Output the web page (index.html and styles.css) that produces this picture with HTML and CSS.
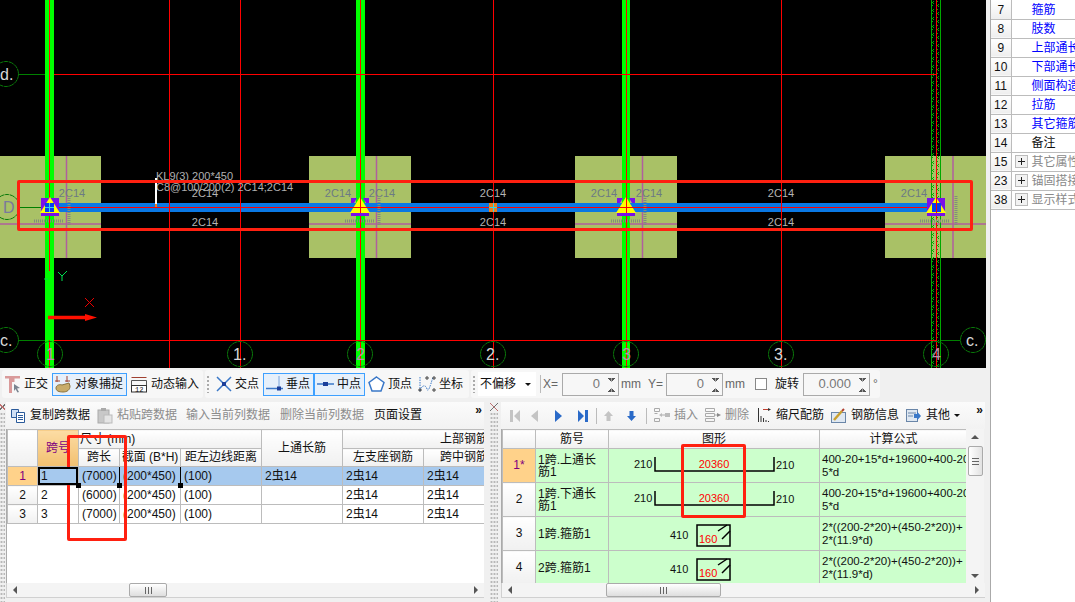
FILE: index.html
```html
<!DOCTYPE html>
<html lang="zh-CN">
<head>
<meta charset="utf-8">
<title>钢筋平法输入</title>
<link rel="stylesheet" href="styles.css">
</head>
<body>
<div class="app">
  <main class="main">
    <svg class="canvas" width="986" height="368" viewBox="0 0 986 368">
      <defs>
        <pattern id="hatch" width="10" height="8" patternUnits="userSpaceOnUse">
          <path class="hatch-x" d="M1 1l3 3m0-3l-3 3M1 4l2 2M6 4l3 3m0-3l-3 3M6 0l2 2"/>
        </pattern>
      </defs>
      <rect class="pad" x="0" y="156" width="101" height="102"/>
      <rect class="pad" x="309" y="156" width="102" height="102"/>
      <rect class="pad" x="575" y="156" width="102" height="102"/>
      <rect class="pad" x="885" y="156" width="101" height="102"/>
      <path class="mauve" d="M66.500 156v102M0 224h101M376.500 156v102M309 224h102M642.500 156v102M575 224h102M953 156v102M885 224h101"/>
      <rect class="col" x="45" y="0" width="9" height="368"/>
      <rect class="col" x="356" y="0" width="9" height="368"/>
      <rect class="col" x="622" y="0" width="8" height="368"/>
      <rect x="931" y="0" width="10" height="368" fill="url(#hatch)"/>
      <path class="hatch-line" d="M931.500 0v368M940.500 0v368"/>
      <rect class="beam" x="54" y="203" width="877" height="9"/>
      <path class="red" d="M169.500 0v368M240.500 0v368M360.500 0v368M493.500 0v368M626.500 0v368M781.500 0v368M936.500 0v368M49.500 0v271M49.500 340v28M54 74.500h882M54 340.500h882M54 207.500h882"/>
      <path class="axis" d="M19 74.500h26M20 207.500h25M19 340.500h26M941 340.500h19"/>
      <g class="bubble">
        <circle cx="6" cy="74" r="12.500"/><circle cx="7" cy="207" r="12.500"/><circle cx="6" cy="340" r="12.500"/>
        <circle cx="973" cy="340" r="12.500"/><circle cx="50" cy="354" r="12.500"/><circle cx="240" cy="354" r="12.500"/>
        <circle cx="360" cy="354" r="12.500"/><circle cx="493" cy="354" r="12.500"/><circle cx="626" cy="354" r="12.500"/>
        <circle cx="781" cy="354" r="12.500"/><circle cx="936" cy="354" r="12.500"/>
      </g>
      <g class="axis-label">
        <text x="0" y="80">d.</text><text class="dim" x="3" y="213">D</text><text x="0" y="346">c.</text>
        <text x="966" y="346">c.</text><text class="pink" x="46" y="360">1</text><text x="233" y="360">1.</text>
        <text class="pink" x="356" y="360">2</text><text x="486" y="360">2.</text><text class="pink" x="622" y="360">3</text>
        <text x="774" y="360">3.</text><text class="pink" x="932" y="360">4</text>
      </g>
      <g class="rebar-label">
        <text x="205" y="197">2C14</text><text x="205" y="226">2C14</text>
        <text x="493" y="197">2C14</text><text x="493" y="226">2C14</text>
        <text x="781" y="197">2C14</text><text x="781" y="226">2C14</text>
      </g>
      <g class="rebar-label on-pad">
        <text x="72" y="197">2C14</text><text x="338" y="197">2C14</text><text x="382" y="197">2C14</text>
        <text x="604" y="197">2C14</text><text x="649" y="197">2C14</text><text x="914" y="197">2C14</text>
      </g>
      <path class="tiny" d="M34 221h30M345 221h30M611 221h30M920 221h30"/>
      <path class="tiny" d="M69 196v30M379 196v30M645 196v30M956 196v30"/>
      <text class="beam-name" x="156" y="180">KL9(3) 200*450</text>
      <text class="beam-name" x="156" y="191">C8@100/200(2) 2C14;2C14</text>
      <rect class="white" x="155" y="178" width="2" height="26"/>
      <rect class="orange" x="155" y="204" width="2" height="3"/>
      <rect class="orange" x="489" y="203" width="8" height="9"/>
      <path class="cyan" d="M493.500 203v9M489 207.500h8"/>
      <g class="node">
        <path class="violet" d="M41 198h18v18H41z"/><path class="yellow" d="M50 197l10 16H40z"/>
        <rect class="blue" x="45" y="203" width="9" height="9"/><path class="cyan" d="M49.500 203v9M45 207.500h9"/>
        <path class="violet" d="M351 198h6l-3 5h-3zM369 198h-6l3 5h3zM351 213h18v3h-18z"/><path class="yellow" d="M360 197l10 16h-20z"/>
        <path class="red" d="M360.500 197v16M351 207.500h19"/>
        <path class="violet" d="M617 198h6l-3 5h-3zM635 198h-6l3 5h3zM617 213h18v3h-18z"/><path class="yellow" d="M626 197l10 16h-20z"/>
        <path class="red" d="M626.500 197v16M617 207.500h19"/>
        <path class="violet" d="M927 198h18v18h-18z"/><path class="yellow" d="M936 197l10 16h-20z"/>
        <rect class="blue" x="932" y="203" width="9" height="9"/><path class="red" d="M936.500 197v16"/>
      </g>
      <path class="ucs-y" d="M58 272l4 4 5-5M62 276v5M44 279h4"/>
      <path class="ucs-x" d="M85 298l9 9m0-9l-9 9"/>
      <path class="arrow" d="M48 317.500h37"/><path class="arrow-head" d="M85 314l12 3.500-12 3.500z"/>
    </svg>

    <div class="toolbar">
      <div class="group g1">
        <div class="btn w47"><svg width="16" height="17" viewBox="0 0 16 17"><path fill="#d99a9a" d="M0 0h15v2.500h-5.500V6H7v11H4V2.500H0z"/><path fill="#7a8490" d="M9 8l6 4-3 .5 2 3.500-1.500.5-2-3.500-1.500 2z"/></svg><span>正交</span></div>
        <div class="btn on w75"><svg width="18" height="18" viewBox="0 0 18 18"><path fill="none" stroke="#a04030" d="M3 1v6M13 1v6M1 6h5M11 6h5"/><path fill="#c9ac6a" stroke="#8a7440" d="M2 13c0-3 4-4 6-3l7-2 1 3c0 4-3 6-7 6-4 0-7-1-7-4z"/></svg><span>对象捕捉</span></div>
        <div class="btn w70"><svg width="17" height="17" viewBox="0 0 17 17"><path fill="none" stroke="#a04030" d="M.5 1.500h15"/><path fill="none" stroke="#555" d="M.5 4.500h15M.5 4.500v5M15.500 4.500v5"/><rect x=".5" y="9.500" width="15" height="6.500" fill="#fff" stroke="#333"/><text class="mini" x="4" y="15.500">12</text></svg><span>动态输入</span></div>
      </div>
      <div class="group g2">
        <i class="grip"></i>
        <div class="btn w48"><svg width="16" height="16" viewBox="0 0 16 16"><path stroke="#3a78c8" stroke-width="1.500" d="M1 1l14 14M15 1L1 15"/><rect x="6" y="6" width="4" height="4" fill="#1c3f9a"/></svg><span>交点</span></div>
        <div class="btn on w51"><svg width="17" height="16" viewBox="0 0 17 16"><path stroke="#3a78c8" stroke-width="1.500" d="M0 12.500h17"/><path stroke="#7aa4dc" d="M13 0v13"/><rect x="11" y="10.500" width="4" height="4" fill="#1c3f9a"/></svg><span>垂点</span></div>
        <div class="btn on w51"><svg width="17" height="16" viewBox="0 0 17 16"><path stroke="#3a78c8" stroke-width="1.500" d="M0 8h17"/><rect x="6" y="6" width="5" height="4" fill="#1c3f9a"/></svg><span>中点</span></div>
        <div class="btn"><svg width="17" height="16" viewBox="0 0 17 16"><path fill="#fff" stroke="#3a78c8" stroke-width="1.500" d="M8.500 1L16 6.500 13 15H4L1 6.500z"/></svg><span>顶点</span></div>
        <div class="btn"><svg width="18" height="16" viewBox="0 0 18 16"><path fill="none" stroke="#3a78c8" stroke-dasharray="1.500 1" d="M2 1v14M2 15c2-7 6-6 7-2s3-2 6-12"/><path fill="none" stroke="#444" d="M1 13h2v2H1zM8 1h2v2H8zM15 1h2v2h-2zM15 13h2v2h-2z"/></svg><span>坐标</span></div>
      </div>
      <div class="group g3">
        <i class="grip"></i>
        <div class="select"><span>不偏移</span><b class="caret"></b></div>
        <i class="sep"></i>
        <span class="dim-label lab-x">X=</span>
        <div class="spin w57"><span>0</span><i class="spin-arrows"></i></div>
        <span class="dim-label lab-u">mm</span>
        <span class="dim-label lab-y">Y=</span>
        <div class="spin w57"><span>0</span><i class="spin-arrows"></i></div>
        <span class="dim-label lab-u">mm</span>
        <i class="check"></i>
        <span class="rot">旋转</span>
        <div class="spin w67"><span>0.000</span><i class="spin-arrows"></i></div>
        <span class="dim-label lab-d">°</span>
      </div>
    </div>

    <div class="panels">
      <i class="dots dots-left"></i>
      <section class="panel panel-left">
        <div class="ptools">
          <span class="pt"><svg width="16" height="15" viewBox="0 0 16 15"><path fill="#cfe0f5" stroke="#2a5a9a" d="M1.500 1.500h7v8h-7z"/><path fill="#fff" stroke="#2a5a9a" d="M6.500 4.500h8v10h-8z"/><path stroke="#2a5a9a" d="M8 7.500h5M8 9.500h5M8 11.500h5"/></svg>复制跨数据</span>
          <span class="pt off pt-p"><svg width="16" height="16" viewBox="0 0 16 16"><rect x="1" y="2" width="11" height="13" fill="#c8c8c8" stroke="#aaa"/><rect x="7" y="7" width="8" height="8" fill="#e4e4e4" stroke="#bbb"/><rect x="4" y="0" width="5" height="3" fill="#aaa"/></svg>粘贴跨数据</span>
          <span class="pt off">输入当前列数据</span>
          <span class="pt off pt-m">删除当前列数据</span>
          <span class="pt pt-m">页面设置</span>
          <b class="more">»</b>
        </div>
        <div class="grid-wrap">
          <table class="grid grid-span">
            <colgroup><col class="c30"><col class="c41"><col class="c41"><col class="c61"><col class="c81"><col class="c81"><col class="c81"><col class="c81"><col class="c81"></colgroup>
            <tr class="h19">
              <th rowspan="2"></th><th rowspan="2" class="hot">跨号</th>
              <th colspan="3" class="tl">尺寸 (mm)</th><th rowspan="2">上通长筋</th><th colspan="3">上部钢筋</th>
            </tr>
            <tr class="h18"><th>跨长</th><th>截面 (B*H)</th><th>距左边线距离</th><th>左支座钢筋</th><th>跨中钢筋</th><th>右支座钢筋</th></tr>
            <tr class="h19 sel">
              <th class="hot-row">1</th><td class="cur">1</td><td class="black-r">(7000)</td><td class="black-r">(200*450)</td><td>(100)</td><td>2虫14</td><td>2虫14</td><td>2虫14</td><td></td>
            </tr>
            <tr class="h19"><th>2</th><td>2</td><td class="black-l">(6000)</td><td>(200*450)</td><td>(100)</td><td></td><td>2虫14</td><td>2虫14</td><td></td></tr>
            <tr class="h19"><th>3</th><td>3</td><td class="black-l">(7000)</td><td>(200*450)</td><td>(100)</td><td></td><td>2虫14</td><td>2虫14</td><td></td></tr>
          </table>
        </div>
        <div class="hscroll"><i class="arr-l"></i><div class="track track-left"><div class="thumb"><i></i></div></div><i class="arr-r"></i></div>
      </section>
      <i class="dots dots-mid"></i>
      <section class="panel panel-right">
        <div class="ptools ptools-r">
          <span class="nav n1 off"><svg width="10" height="12" viewBox="0 0 10 12"><path fill="#c4c4c4" d="M0 0h3v12H0zM10 0v12L4 6z"/></svg></span>
          <span class="nav n2 off"><svg width="7" height="12" viewBox="0 0 7 12"><path fill="#c4c4c4" d="M7 0v12L0 6z"/></svg></span>
          <span class="nav"><svg width="7" height="12" viewBox="0 0 7 12"><path fill="#2a6ac8" d="M0 0v12l7-6z"/></svg></span>
          <span class="nav"><svg width="10" height="12" viewBox="0 0 10 12"><path fill="#2a6ac8" d="M0 0v12l6-6zM7 0h3v12H7z"/></svg></span>
          <i class="vsep"></i>
          <span class="nav n-up"><svg width="9" height="10" viewBox="0 0 9 10"><path fill="#c4c4c4" d="M4.500 0L9 5H6.500v5h-4V5H0z"/></svg></span>
          <span class="nav n-dn"><svg width="9" height="10" viewBox="0 0 9 10"><path fill="#2a6ac8" d="M2.500 0h4v5H9l-4.500 5L0 5h2.500z"/></svg></span>
          <i class="vsep"></i>
          <span class="pt off pt-i"><svg width="16" height="14" viewBox="0 0 16 14"><path fill="none" stroke="#aaa" d="M.5.500h5v3h-5zM.5 10.500h5v3h-5zM.500 5.500h3M8 7h3"/><path fill="#bbb" d="M8 5v4L5 7zM11 5h5v4h-5z"/></svg>插入</span>
          <span class="pt off pt-d"><svg width="16" height="14" viewBox="0 0 16 14"><path fill="none" stroke="#aaa" d="M.5.500h9v3h-9zM.5 5.500h9v3h-9zM.5 10.500h9v3h-9zM10 7h3"/><path fill="#888" d="M12 5v4l4-2z"/></svg>删除</span>
          <span class="pt pt-s"><svg width="13" height="14" viewBox="0 0 13 14"><path stroke="#333" d="M.5 0v14M3 14V8M5.500 14V10M8 14v-2M10.500 14v-1" fill="none"/><path stroke="#c04030" d="M5 1.500h5"/><path fill="#333" d="M10 0l3 1.500-3 1.500z"/></svg>缩尺配筋</span>
          <span class="pt pt-s"><svg width="15" height="15" viewBox="0 0 15 15"><rect x=".5" y="4.500" width="14" height="10" fill="#dfe8f2" stroke="#6a86a8"/><path stroke="#c9a030" stroke-width="2.500" d="M3 12L11 3"/><path stroke="#b04030" stroke-width="2" d="M11 3l2-2"/></svg>钢筋信息</span>
          <span class="pt pt-s"><svg width="15" height="15" viewBox="0 0 15 15"><rect x=".5" y="1.500" width="11" height="12" fill="#dfe8f2" stroke="#6a86a8"/><path stroke="#6a86a8" d="M2 5h8M2 8h5"/><path fill="#3a78c8" d="M8 6h3V3.500L15 8l-4 4.500V10H8z"/></svg>其他<b class="down"></b></span>
          <b class="more">»</b>
        </div>
        <div class="split-body">
          <div class="grid-wrap wr">
            <table class="grid grid-bars">
              <colgroup><col class="c33"><col class="c73"><col class="c211"><col class="c148"></colgroup>
              <tr class="h19"><th></th><th>筋号</th><th>图形</th><th>计算公式</th></tr>
              <tr class="h33 green">
                <th class="hot-row">1*</th><td class="tall">1跨.上通长筋1</td>
                <td class="fig"><svg width="211" height="33" viewBox="0 0 211 33"><text class="fig-t" x="25" y="19">210</text><path class="bar" d="M46 8v14h119V8"/><text class="fig-r" x="105" y="19" text-anchor="middle">20360</text><text class="fig-t" x="167" y="20">210</text></svg></td>
                <td class="formula">400-20+15*d+19600+400-20+15*<br>5*d</td>
              </tr>
              <tr class="h34 green">
                <th>2</th><td class="tall">1跨.下通长筋1</td>
                <td class="fig"><svg width="211" height="33" viewBox="0 0 211 33"><text class="fig-t" x="25" y="19">210</text><path class="bar" d="M46 8v14h119V8"/><text class="fig-r" x="105" y="19" text-anchor="middle">20360</text><text class="fig-t" x="167" y="20">210</text></svg></td>
                <td class="formula">400-20+15*d+19600+400-20+15*<br>5*d</td>
              </tr>
              <tr class="h34 green">
                <th>3</th><td class="tall">1跨.箍筋1</td>
                <td class="fig black-l"><svg width="211" height="33" viewBox="0 0 211 33"><text class="fig-t" x="61" y="22">410</text><rect class="bar" x="88" y="8" width="33" height="21"/><path class="bar" d="M109 14l9-6M113 22l8-8"/><text class="fig-r" x="90" y="26">160</text></svg></td>
                <td class="formula">2*((200-2*20)+(450-2*20))+<br>2*(11.9*d)</td>
              </tr>
              <tr class="h33 green">
                <th>4</th><td class="tall">2跨.箍筋1</td>
                <td class="fig black-l"><svg width="211" height="33" viewBox="0 0 211 33"><text class="fig-t" x="61" y="22">410</text><rect class="bar" x="88" y="8" width="33" height="21"/><path class="bar" d="M109 14l9-6M113 22l8-8"/><text class="fig-r" x="90" y="26">160</text></svg></td>
                <td class="formula">2*((200-2*20)+(450-2*20))+<br>2*(11.9*d)</td>
              </tr>
            </table>
          </div>
          <div class="vscroll"><i class="arr-u"></i><div class="vthumb"><i></i></div><i class="arr-d"></i></div>
        </div>
        <div class="hscroll"><i class="arr-l"></i><div class="track track-right"><div class="thumb"><i></i></div></div><i class="arr-r"></i></div>
      </section>
    </div>
  </main>

  <aside class="props">
    <table class="prop-table">
      <tr><th>7</th><td class="link">箍筋</td></tr>
      <tr><th>8</th><td class="link">肢数</td></tr>
      <tr><th>9</th><td class="link">上部通长筋</td></tr>
      <tr><th>10</th><td class="link">下部通长筋</td></tr>
      <tr><th>11</th><td class="link">侧面构造筋</td></tr>
      <tr><th>12</th><td class="link">拉筋</td></tr>
      <tr><th>13</th><td class="link">其它箍筋</td></tr>
      <tr><th>14</th><td>备注</td></tr>
      <tr><th>15</th><td class="grp"><i class="plus"></i>其它属性</td></tr>
      <tr><th>23</th><td class="grp"><i class="plus"></i>锚固搭接</td></tr>
      <tr><th>38</th><td class="grp"><i class="plus"></i>显示样式</td></tr>
    </table>
  </aside>
  <div class="mark mark-beam"></div>
  <div class="mark mark-span"></div>
  <div class="mark mark-fig"></div>
</div>
</body>
</html>
```
FILE: styles.css
```css
* { box-sizing: border-box; }
html, body { margin: 0; padding: 0; }
body { width: 1075px; height: 602px; overflow: hidden; background: #f0f0f0; font: 12px/1.2 "Liberation Sans", "Noto Sans CJK SC", sans-serif; color: #111; }
i, b { display: block; font-style: normal; }
svg { display: block; flex: none; }

.app { position: relative; display: flex; width: 1075px; height: 602px; }
.main { width: 986px; flex: none; display: flex; flex-direction: column; }

/* drawing canvas */
.canvas { background: #000; }
.pad { fill: #a9c166; }
.mauve { stroke: #b05f9e; stroke-width: 1.500; fill: none; }
.col { fill: #00ff00; }
.beam { fill: #0a78e4; }
.red { stroke: #ff0000; stroke-width: 1; fill: none; }
.axis { stroke: #008000; fill: none; }
.bubble circle { fill: none; stroke: #0a7a0a; stroke-dasharray: 5 .6; }
.axis-label text { fill: #d8d8d8; font: 16px "Liberation Sans", sans-serif; }
.axis-label .dim { fill: #7a7a9c; }
.axis-label .pink { fill: #b890b0; }
.rebar-label text { fill: #b4b4b4; font: 11px "Liberation Sans", sans-serif; text-anchor: middle; }
.rebar-label.on-pad text { fill: #6c7a84; }
.tiny { stroke: #828a80; stroke-width: 3; stroke-dasharray: 1 1; fill: none; }
.beam-name { fill: #b0b0b0; font: 11px "Liberation Sans", sans-serif; }
.white { fill: #fff; }
.orange { fill: #f07c1c; }
.cyan { stroke: #30d8e8; fill: none; }
.violet { fill: #7a10e8; }
.yellow { fill: #ffff00; }
.blue { fill: #0a3cf0; }
.hatch-x { stroke: #00b000; fill: none; }
.hatch-line { stroke: #00a800; fill: none; }
.ucs-y { stroke: #00e050; fill: none; }
.ucs-x { stroke: #e80000; fill: none; }
.arrow { stroke: #ff1000; stroke-width: 3.500; fill: none; }
.arrow-head { fill: #ff1000; }

/* snap toolbar */
.toolbar { height: 32px; display: flex; gap: 2px; padding: 2px 0 2px 2px; }
.group { height: 28px; display: flex; align-items: center; background: #f7f7f7; border-radius: 3px; }
.g1 { width: 201px; padding-left: 1px; gap: 2px; }
.g2 { width: 264px; gap: 2px; }
.g3 { width: 409px; }
.btn { height: 23px; padding: 0 1px; border: 1px solid transparent; display: flex; align-items: center; gap: 3px; white-space: nowrap; }
.btn.on { border-color: #3ea0ff; background: #e6f0fb; }
.w47 { width: 47px; } .w48 { width: 48px; } .w75 { width: 75px; } .w70 { width: 72px; }
.w51 { width: 51px; margin: 0 -1px; padding-left: 2px; gap: 3px; }
.mini { font: 7px "Liberation Mono", monospace; fill: #111; }
.grip { width: 4px; height: 18px; margin: 0 2px 0 1px; background: radial-gradient(circle, #aaa 1px, transparent 1.200px) 0 0 / 4px 4px; }
.select { width: 58px; height: 24px; background: #fff; display: flex; align-items: center; justify-content: space-between; padding: 0 5px 0 2px; }
.caret { border: 3px solid transparent; border-top: 3px solid #111; border-bottom: 0; }
.sep { width: 1px; height: 18px; background: #bbb; margin: 0 0 0 4px; }
.dim-label { color: #666; font-size: 12px; }
.lab-x { margin: 0 4px 0 2px; }
.lab-u { margin: 0 3px 0 2px; }
.lab-y { margin: 0 3px 0 4px; }
.lab-d { margin-left: 3px; }
.spin { height: 23px; border: 1px solid #aaa; background: #f7f7f7; display: flex; align-items: center; justify-content: flex-end; color: #777; font-size: 13px; padding-right: 18px; position: relative; }
.w57 { width: 57px; } .w67 { width: 67px; }
.spin-arrows { position: absolute; right: 3px; top: 4px; width: 7px; height: 14px; background: linear-gradient(45deg, transparent 50%, #555 50%) 0 0 / 3.500px 4px no-repeat, linear-gradient(-45deg, transparent 50%, #555 50%) 3.500px 0 / 3.500px 4px no-repeat, linear-gradient(135deg, transparent 50%, #555 50%) 0 10px / 3.500px 4px no-repeat, linear-gradient(-135deg, transparent 50%, #555 50%) 3.500px 10px / 3.500px 4px no-repeat; }
.check { width: 12px; height: 12px; border: 1px solid #888; background: #fff; margin: 0 8px 0 7px; }
.rot { margin-right: 4px; }

/* bottom panels */
.panels { flex: 1; display: flex; min-height: 0; }
.dots { display: block; position: relative; background: radial-gradient(circle, #b8b8b8 1px, transparent 1.200px) 0 0 / 3px 4px; }
.dots::before { content: ""; display: block; height: 12px; background: linear-gradient(45deg, transparent 44%, #c07070 44%, #c07070 56%, transparent 56%) 0 3px / 100% 8px no-repeat, linear-gradient(-45deg, transparent 44%, #707070 44%, #707070 56%, transparent 56%) 0 3px / 100% 8px no-repeat, #f0f0f0; }
.dots-left { width: 5px; margin-right: 1px; }
.dots-mid { width: 8px; margin: 0 3px 0 6px; }
.panel { display: flex; flex-direction: column; height: 198px; padding-top: 2px; }
.panel-left { width: 478px; }
.panel-right { width: 484px; }
.ptools { height: 27px; display: flex; align-items: center; gap: 9px; padding-left: 4px; background: linear-gradient(#fbfbfb, #f2f2f2); position: relative; }
.pt { display: flex; align-items: center; gap: 4px; white-space: nowrap; }
.off { color: #8c8c8c; }
.pt-p { margin-left: -2px; }
.pt-m { margin-left: 1px; }
.more { position: absolute; right: 2px; top: 2px; font-size: 12px; line-height: 12px; }
.ptools-r { gap: 0; padding-left: 9px; }
.nav { width: 23px; display: flex; justify-content: flex-start; }
.n1 { width: 21px; } .n2 { width: 24px; }
.vsep { width: 1px; height: 16px; background: #bbb; margin: 0 7px 0 -5px; }
.n-up { width: 23px; } .n-dn { width: 24px; }
.pt-i { margin-right: 7px; } .pt-d { margin-right: 9px; } .pt-s { margin-right: 7px; gap: 5px; }
.down { border: 3px solid transparent; border-top: 3px solid #111; border-bottom: 0; margin-left: -1px; }

.grid-wrap { height: 154px; background: #fff; border-left: 1px solid #aaa; overflow: hidden; }
.grid { table-layout: fixed; border-collapse: collapse; }
.grid-span { width: 578px; }
.grid-bars { width: 465px; }
.c30 { width: 30px; } .c41 { width: 41px; } .c61 { width: 61px; } .c81 { width: 81px; }
.c33 { width: 33px; } .c73 { width: 73px; } .c211 { width: 211px; } .c148 { width: 148px; }
.grid th, .grid td { border: 1px solid #bcbcbc; padding: 0; overflow: hidden; white-space: nowrap; font-weight: normal; position: relative; }
.grid th { background: linear-gradient(#fff, #f0f0f0); text-align: center; }
.grid td { padding-left: 3px; background: #fff; }
.grid .tl { text-align: left; padding-left: 1px; }
.h18 { height: 18px; } .h19 { height: 19px; } .h33 { height: 33px; } .h34 { height: 34px; }
.grid .hot { background: linear-gradient(#fcdca4, #f2c070); color: #800080; }
.grid .hot-row { background: #ffd28a; color: #800080; }
.sel td { background: #a6c9ee; }
.grid td.cur { box-shadow: inset 0 0 0 2px #000, 0 0 0 1px #000; background: #a6c9ee; overflow: visible; z-index: 2; }
.grid td.black-r { border-right-color: #000; overflow: visible; }
.grid td.cur::after, .grid td.black-r::after { content: ""; position: absolute; right: -3px; bottom: -3px; width: 5px; height: 5px; background: #000; z-index: 3; }
.grid td.black-l { border-left-color: #000; }
.green td { background: #ccffcc; }
.grid td.tall { white-space: normal; line-height: 12px; word-break: break-all; padding: 0 1px 0 2px; }
.grid td.fig { padding: 0; }
.grid td.formula { padding: 0 0 0 2px; line-height: 12.500px; font-size: 11.500px; }
.fig-t { font: 11px "Liberation Sans", sans-serif; fill: #111; }
.fig-r { font: 11px "Liberation Sans", sans-serif; fill: #ff0000; }
.bar { fill: none; stroke: #000; stroke-width: 1.500; }

.split-body { display: flex; height: 154px; }
.wr { width: 465px; flex: none; }
.vscroll { width: 18px; background: #f4f4f4; display: flex; flex-direction: column; align-items: center; padding-top: 6px; position: relative; }
.vthumb { width: 15px; height: 30px; margin-top: 7px; border: 1px solid #aaa; border-radius: 2px; background: linear-gradient(90deg, #fff, #e2e2e2); display: flex; align-items: center; justify-content: center; }
.vthumb i { width: 7px; height: 7px; background: repeating-linear-gradient(#666 0 1px, transparent 1px 3px); }
.arr-u { border: 4px solid transparent; border-bottom: 4px solid #555; border-top: 0; }
.arr-d { border: 4px solid transparent; border-top: 4px solid #555; border-bottom: 0; position: absolute; bottom: 5px; }

.hscroll { height: 15px; display: flex; align-items: center; background: #f4f4f4; border: 1px solid #d0d0d0; border-width: 0 0 1px 1px; padding: 0 6px; }
.arr-l { flex: none; border: 4px solid transparent; border-right: 4px solid #555; border-left: 0; }
.arr-r { flex: none; border: 4px solid transparent; border-left: 4px solid #555; border-right: 0; }
.track { flex: 1; height: 14px; position: relative; }
.thumb { position: absolute; top: 0; height: 14px; border: 1px solid #aaa; border-radius: 2px; background: linear-gradient(#fff, #dedede); display: flex; align-items: center; justify-content: center; }
.thumb i { width: 7px; height: 7px; background: repeating-linear-gradient(90deg, #666 0 1px, transparent 1px 3px); }
.track-left .thumb { left: 112px; width: 38px; }
.track-right .thumb { left: 94px; width: 115px; }

/* property list */
.props { flex: 1; min-width: 0; background: #fff; margin-left: 4px; border-left: 1px solid #aaa; overflow: hidden; }
.prop-table { table-layout: fixed; width: 104px; border-collapse: collapse; }
.prop-table tr { height: 19px; }
.prop-table th { width: 20px; padding: 2px 0 0; font-weight: normal; background: linear-gradient(#fff, #eee); border: 1px solid #bcbcbc; border-width: 0 1px 1px 0; }
.prop-table td { padding: 2px 0 0 20px; white-space: nowrap; overflow: hidden; border-bottom: 1px solid #bcbcbc; }
.prop-table .link { color: #0000ff; }
.prop-table .grp { color: #8a8a8a; padding-left: 3px; }
.plus { display: inline-block; width: 13px; height: 13px; border: 1px solid #bbb; margin-right: 4px; vertical-align: -2px; background: linear-gradient(#222, #222) 50% 50% / 7px 1px no-repeat, linear-gradient(#222, #222) 50% 50% / 1px 7px no-repeat, #f2f2f2; }

/* red annotation frames */
.mark { position: absolute; border: 3px solid #ff2010; border-radius: 2px; pointer-events: none; }
.mark-beam { left: 17px; top: 180px; width: 956px; height: 51px; }
.mark-span { left: 67px; top: 435px; width: 60px; height: 106px; }
.mark-fig { left: 681px; top: 444px; width: 65px; height: 74px; }
```
